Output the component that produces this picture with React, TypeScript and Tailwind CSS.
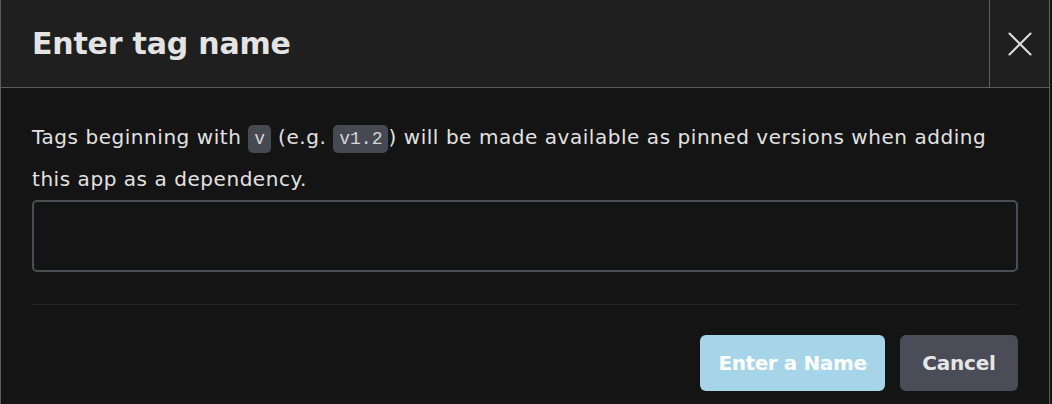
import { X } from 'lucide-react';

const mono = { fontFamily: '"Liberation Mono", "DejaVu Sans Mono", monospace' };

export default function App() {
  return (
    <div className="w-[1052px] h-[404px] bg-[#161616] overflow-hidden" style={{ fontFamily: '"DejaVu Sans", "Open Sans", sans-serif' }}>
      <div className="w-[1050px] h-full bg-[#141414] border-l border-r border-[#5c5c5c] flex flex-col">
        {/* Header */}
        <div className="h-[88px] shrink-0 bg-[#1f1f1f] border-b border-[#5c5c5c] flex items-stretch">
          <div className="flex-1 flex items-center pl-[31px]">
            <h1 className="text-[30px] font-bold text-[#e4e4e4] tracking-[-0.2px]">Enter tag name</h1>
          </div>
          <button className="w-[60px] border-l border-[#5c5c5c] flex items-center justify-center text-[#dcdcdc]">
            <X className="w-[42px] h-[42px]" strokeWidth={1.2} />
          </button>
        </div>

        {/* Body */}
        <div className="px-[31px] pt-[28px]">
          <p className="text-[20px] leading-[42px] text-[#e2e2e2] tracking-[0.55px]">
            Tags beginning with{' '}
            <code className="bg-[#464952] rounded-[5px] px-[6px] py-[4px] text-[18px] leading-none text-[#d6d6d6] tracking-normal" style={mono}>v</code>{' '}
            (e.g.{' '}
            <code className="bg-[#464952] rounded-[5px] px-[6px] py-[4px] text-[18px] leading-none text-[#d6d6d6] tracking-normal" style={mono}>v1.2</code>
            ) will be made available as pinned versions when adding
            <br />
            this app as a dependency.
          </p>
          <input className="w-full h-[72px] bg-[#141414] border-2 border-[#4a4c56] rounded-[5px] outline-none px-3 text-[#e2e2e2]" />
          <div className="mt-8 border-t border-[#242424]" />
          <div className="mt-[30px] flex justify-end gap-[15px]">
            <button className="w-[185px] h-[56px] rounded-[6px] bg-[#a6d5ea] text-white text-[20px] font-bold tracking-[-0.4px]">
              Enter a Name
            </button>
            <button className="w-[118px] h-[56px] rounded-[6px] bg-[#4a4d57] text-[#e6e6e6] text-[20px] font-bold tracking-[-0.2px]">
              Cancel
            </button>
          </div>
        </div>
      </div>
    </div>
  );
}
